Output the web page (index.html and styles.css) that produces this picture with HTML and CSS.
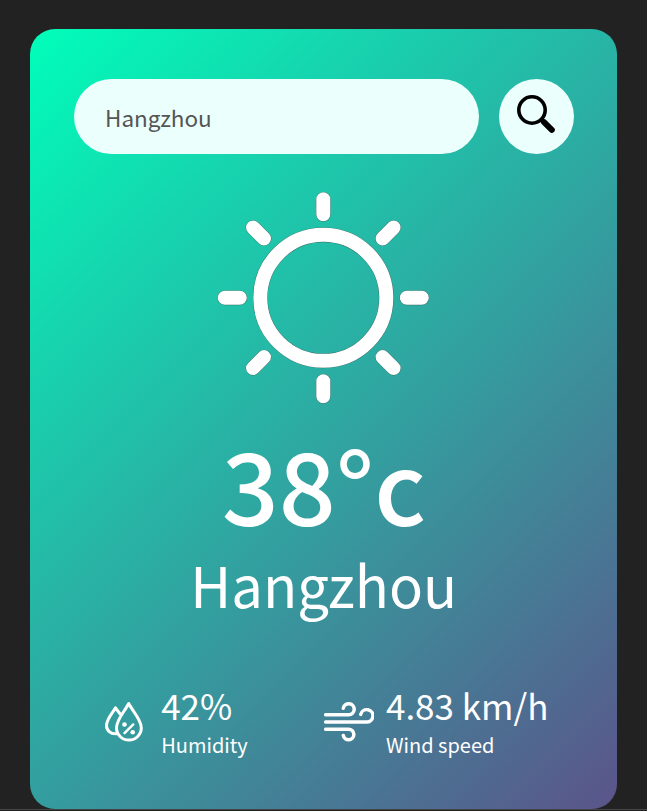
FILE: index.html
```html
<!DOCTYPE html>
<html lang="en">
<head>
<meta charset="utf-8">
<title>Weather</title>
<link rel="stylesheet" href="styles.css">
</head>
<body>
<main class="card">
  <div class="search">
    <input class="search-input" type="text" value="Hangzhou" spellcheck="false" aria-label="City">
    <button class="search-button" aria-label="Search">
      <svg width="75" height="75" viewBox="0 0 75 75" fill="none" stroke="#000">
        <circle cx="33" cy="31" r="13.2" stroke-width="3.6"/>
        <path d="M42.500 40.500l3 3" stroke-width="3.800"/>
        <path d="M45 43.200l7.800 7.600" stroke-width="6" stroke-linecap="round"/>
      </svg>
    </button>
  </div>
  <section class="weather">
    <svg class="sun" viewBox="0.7 0.2 212 212" fill="none" stroke-linecap="round">
      <defs>
        <g id="sun-shape">
          <circle cx="106" cy="106" r="63"/>
          <path d="M106 7.500v15M106 189.500v15M7.500 106h15M189.500 106h15M35.700 35.700l11 11M176.300 35.700l-11 11M35.700 176.300l11-11M176.300 176.300l-11-11"/>
        </g>
      </defs>
      <use href="#sun-shape" class="sun-edge"/>
      <use href="#sun-shape" class="sun-body"/>
    </svg>
    <h1 class="temp">38°c</h1>
    <h2 class="city">Hangzhou</h2>
  </section>
  <section class="details">
    <div class="detail">
      <svg class="detail-icon" viewBox="0 0 50 50" fill="none" stroke="#fff" stroke-width="3" stroke-linecap="round" stroke-linejoin="round">
        <path d="M29.700 6.500C26 14 17.500 22.500 17.500 30.700a12.400 12.400 0 0 0 24.800 0C42.300 22.500 33.500 14 29.700 6.500z"/>
        <path d="M20.800 16.500Q18 13 16.500 10.800C13.500 16 7.500 22 7.500 28.500C7.500 33.500 11.500 37 17 36.800"/>
        <path d="M25.500 36.200l8.800-8.800" stroke-width="2.400"/>
        <g fill="#fff" stroke="none"><circle cx="25.500" cy="27.500" r="2.300"/><circle cx="33.700" cy="35.200" r="2.300"/></g>
      </svg>
      <div><p class="value">42%</p><p class="label">Humidity</p></div>
    </div>
    <div class="detail">
      <svg class="detail-icon" viewBox="0 0 50 50" fill="none" stroke="#fff" stroke-width="3.500" stroke-linecap="round">
        <path d="M1.700 17.700h22.800a5.500 5.500 0 1 0-5.200-6.500"/>
        <path d="M1.700 25h40.200a6.200 6.200 0 1 0-5.200-7.600"/>
        <path d="M1.700 32.200h22.800a5.300 5.300 0 1 1-5.200 6.200"/>
      </svg>
      <div><p class="value">4.83 km/h</p><p class="label">Wind speed</p></div>
    </div>
  </section>
</main>
</body>
</html>
```
FILE: styles.css
```css
* {
  margin: 0;
  padding: 0;
  box-sizing: border-box;
  font-family: "Noto Sans CJK SC", "Noto Sans", sans-serif;
}

body {
  height: 811px;
  padding: 29px 30px 0;
  overflow: hidden;
  background: linear-gradient(#444, #444) 0 809px / 100% 1px no-repeat #222;
}

.card {
  width: 587px;
  height: 780px;
  padding: 50px 43px 0 44px;
  border-radius: 25px;
  background: linear-gradient(135deg, #00feba, #5b548a);
  color: #fff;
  text-align: center;
}

.search {
  display: flex;
  justify-content: space-between;
}

.search-input {
  width: 405px;
  height: 75px;
  padding: 1px 31px 0;
  border: 0;
  outline: 0;
  border-radius: 38px;
  background: #ebfffc;
  color: #555;
  font-size: 22.5px;
}

.search-button {
  width: 75px;
  height: 75px;
  border: 0;
  border-radius: 50%;
  background: #ebfffc;
}

.search-button svg {
  display: block;
}

.weather {
  margin-right: 0.5px;
}

.sun {
  display: block;
  width: 212px;
  height: 212px;
  margin: 38px auto 18.5px;
}

.sun-edge {
  stroke: #33675f;
  stroke-width: 14.7px;
}

.sun-body {
  stroke: #fff;
  stroke-width: 14px;
}

.temp {
  font-size: 100px;
  font-weight: 500;
  line-height: 120px;
}

.city {
  font-size: 56.25px;
  font-weight: 400;
  line-height: 81px;
}

.details {
  display: flex;
  justify-content: space-between;
  margin-top: 62.5px;
  padding: 0 25.5px 0 25px;
}

.detail {
  display: flex;
  align-items: center;
  text-align: left;
}

.detail-icon {
  width: 50px;
  height: 50px;
  margin-right: 12.2px;
}

.value {
  margin-top: -7.5px;
  font-size: 35px;
  line-height: 51px;
  white-space: nowrap;
}

.label {
  font-size: 20px;
  line-height: 29px;
}
```
